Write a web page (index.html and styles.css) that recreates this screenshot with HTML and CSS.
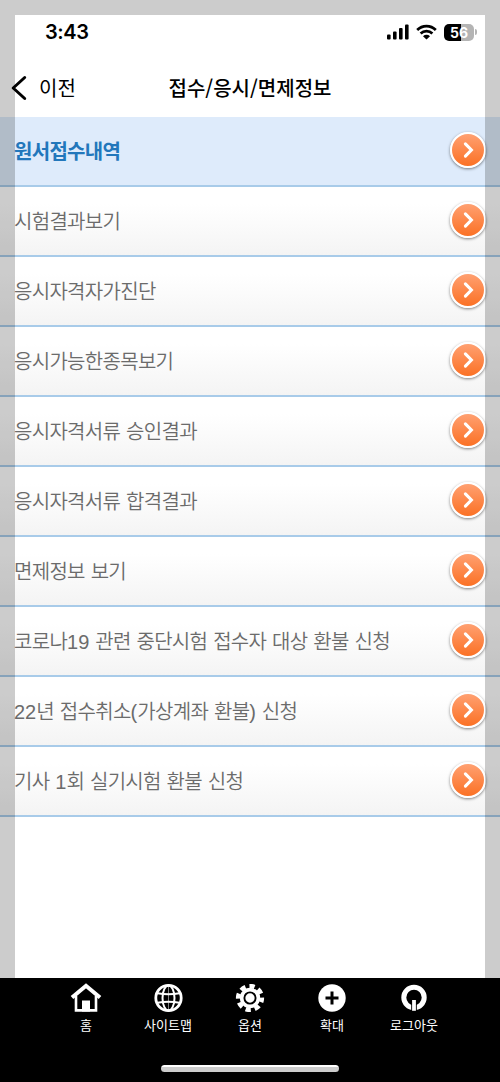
FILE: index.html
```html
<!DOCTYPE html>
<html lang="ko">
<head>
  <meta charset="utf-8">
  <title>접수/응시/면제정보</title>
  <link rel="stylesheet" href="styles.css">
</head>
<body>
  <div class="screen">
    <div class="status-bar">
      <span class="time">3:43</span>
      <div class="status-icons">
        <svg class="signal" width="23" height="16" viewBox="0 0 23 16">
          <rect x="0" y="10.5" width="3.6" height="5" rx="1"/>
          <rect x="6" y="7.5" width="3.6" height="8" rx="1"/>
          <rect x="12" y="4" width="3.6" height="11.5" rx="1"/>
          <rect x="18" y="0.5" width="3.6" height="15" rx="1"/>
        </svg>
        <svg class="wifi" width="21" height="16" viewBox="0 0 21 16">
          <path d="M1.2 6a13 13 0 0 1 18.6 0M4.6 9.5a8.5 8.5 0 0 1 11.8 0" fill="none" stroke="#000" stroke-width="2.7"/>
          <path d="M10.5 15.5L7 12.2a5 5 0 0 1 7 0z"/>
        </svg>
        <div class="battery">56</div>
        <div class="battery-tip"></div>
      </div>
    </div>

    <div class="header">
      <a class="back">
        <svg width="16" height="26" viewBox="0 0 16 26">
          <path d="M13.7 2.5L2.2 13l11.5 10.5" fill="none" stroke="#000" stroke-width="3" stroke-linecap="round" stroke-linejoin="round"/>
        </svg>
        <span>이전</span>
      </a>
      <h1>접수/응시/면제정보</h1>
    </div>

    <ul class="menu">
      <li class="on"><span>원서접수내역</span><i class="arrow"><svg viewBox="0 0 32 32"><path d="M13.4 9.8l6 6.2-6 6.2"/></svg></i></li>
      <li><span>시험결과보기</span><i class="arrow"><svg viewBox="0 0 32 32"><path d="M13.4 9.8l6 6.2-6 6.2"/></svg></i></li>
      <li><span>응시자격자가진단</span><i class="arrow"><svg viewBox="0 0 32 32"><path d="M13.4 9.8l6 6.2-6 6.2"/></svg></i></li>
      <li><span>응시가능한종목보기</span><i class="arrow"><svg viewBox="0 0 32 32"><path d="M13.4 9.8l6 6.2-6 6.2"/></svg></i></li>
      <li><span>응시자격서류 승인결과</span><i class="arrow"><svg viewBox="0 0 32 32"><path d="M13.4 9.8l6 6.2-6 6.2"/></svg></i></li>
      <li><span>응시자격서류 합격결과</span><i class="arrow"><svg viewBox="0 0 32 32"><path d="M13.4 9.8l6 6.2-6 6.2"/></svg></i></li>
      <li><span>면제정보 보기</span><i class="arrow"><svg viewBox="0 0 32 32"><path d="M13.4 9.8l6 6.2-6 6.2"/></svg></i></li>
      <li><span>코로나<b>19</b> 관련 중단시험 접수자 대상 환불 신청</span><i class="arrow"><svg viewBox="0 0 32 32"><path d="M13.4 9.8l6 6.2-6 6.2"/></svg></i></li>
      <li><span><b>22</b>년 접수취소<b>(</b>가상계좌 환불<b>)</b> 신청</span><i class="arrow"><svg viewBox="0 0 32 32"><path d="M13.4 9.8l6 6.2-6 6.2"/></svg></i></li>
      <li><span>기사 <b>1</b>회 실기시험 환불 신청</span><i class="arrow"><svg viewBox="0 0 32 32"><path d="M13.4 9.8l6 6.2-6 6.2"/></svg></i></li>
    </ul>

    <div class="footer">
      <div class="tabs">
        <a>
          <svg width="32" height="32" viewBox="0 0 32 32">
            <path d="M2 15.5L16 3.8l14 11.7" fill="none" stroke="#fff" stroke-width="4"/>
            <path d="M6 14v14.4h20V14" fill="none" stroke="#fff" stroke-width="2.6"/>
            <rect x="12" y="18.5" width="8" height="11" fill="#fff"/>
          </svg>
          <span>홈</span>
        </a>
        <a>
          <svg width="32" height="32" viewBox="0 0 32 32">
            <g fill="none" stroke="#fff" stroke-width="2">
              <circle cx="16.5" cy="16" r="12.7" stroke-width="2.8"/>
              <ellipse cx="16.5" cy="16" rx="6" ry="12.5"/>
              <path d="M5.5 11.3q11 2 22 0M5.5 20.7q11-2 22 0"/>
              <path d="M16.5 3v26" stroke-width="1" opacity=".5"/>
            </g>
          </svg>
          <span>사이트맵</span>
        </a>
        <a>
          <svg width="32" height="32" viewBox="0 0 32 32">
            <g transform="rotate(8 16 16)">
              <circle cx="16" cy="16" r="10.2" fill="#fff"/>
              <circle cx="16" cy="16" r="11.8" fill="none" stroke="#fff" stroke-width="4.6" stroke-dasharray="5.268 4" stroke-dashoffset="2.6"/>
            </g>
            <circle cx="16" cy="16" r="5.6" fill="none" stroke="#000" stroke-width="1.9"/>
          </svg>
          <span>옵션</span>
        </a>
        <a>
          <svg width="32" height="32" viewBox="0 0 32 32">
            <circle cx="16" cy="16" r="13.7" fill="#fff"/>
            <path d="M16 9.5v13M9.5 16h13" stroke="#000" stroke-width="3"/>
          </svg>
          <span>확대</span>
        </a>
        <a>
          <svg width="32" height="32" viewBox="0 0 32 32">
            <circle cx="16" cy="15.5" r="10.2" fill="none" stroke="#fff" stroke-width="5"/>
            <path d="M16 18v12" stroke="#000" stroke-width="5.6"/>
            <path d="M16 18v10.8" stroke="#fff" stroke-width="3.8"/>
          </svg>
          <span>로그아웃</span>
        </a>
      </div>
      <div class="home-bar"></div>
    </div>
    <div class="frame"></div>
  </div>
</body>
</html>
```

FILE: styles.css
```css
* {
  box-sizing: border-box;
}

body {
  margin: 0;
  background: #fff;
  font-family: "Liberation Sans", "Noto Sans CJK KR", sans-serif;
}

.screen {
  position: relative;
  display: flex;
  flex-direction: column;
  width: 500px;
  height: 1082px;
  overflow: hidden;
}

/* shaded edge over the whole screen */
.frame {
  position: absolute;
  inset: 0;
  border: 15px solid rgba(0, 0, 0, 0.2);
  pointer-events: none;
}

.status-bar {
  display: flex;
  justify-content: space-between;
  align-items: center;
  height: 34px;
  margin-top: 15px;
  padding: 0 23px 0 45px;
}

.time {
  font: 600 20px Inter, sans-serif;
  letter-spacing: -0.4px;
}

.status-icons {
  display: flex;
  align-items: center;
}

.wifi {
  margin: 0 7px 0 6px;
}

.battery {
  width: 30px;
  height: 17px;
  border-radius: 5px;
  background: linear-gradient(to right, #000 56%, #b4b4b4 56%);
  color: #fff;
  font: 700 14px/17px Inter, sans-serif;
  text-align: center;
}

.battery-tip {
  width: 2px;
  height: 6px;
  margin-left: 1px;
  border-radius: 0 2px 2px 0;
  background: #b4b4b4;
}

.header {
  display: grid;
  grid-template-columns: 100px 1fr 100px;
  align-items: center;
  height: 68px;
  padding-top: 9px;
}

.back {
  display: flex;
  align-items: center;
  gap: 12px;
  padding-left: 11px;
  font-size: 20px;
}

.header h1 {
  margin: 0;
  font-size: 20px;
  font-weight: 500;
  font-family: "Noto Sans CJK KR", sans-serif;
  text-align: center;
  white-space: nowrap;
}

.menu {
  margin: 0;
  padding: 0;
  list-style: none;
}

.menu li {
  display: flex;
  justify-content: space-between;
  align-items: center;
  height: 70px;
  padding: 0 14px 2px;
  border-bottom: 2px solid #a8cbe9;
  background: linear-gradient(#fff 25%, #f4f4f4);
  color: #6b6b6b;
  font-size: 20px;
  font-weight: 350;
  letter-spacing: -0.7px;
  word-spacing: 1px;
}

.menu li b {
  font-weight: inherit;
  letter-spacing: 0;
}

.menu li.on {
  background: #deebfb;
  color: #2277bb;
  font-weight: 700;
}

.arrow {
  width: 36px;
  height: 36px;
  border: 2px solid #fff;
  border-radius: 50%;
  background: linear-gradient(#ffa071, #fb7125);
  box-shadow: 0 1px 3px rgba(0, 0, 0, 0.5);
}

.arrow svg {
  display: block;
  fill: none;
  stroke: #fff;
  stroke-width: 3.1;
  stroke-linecap: round;
}

.footer {
  display: flex;
  flex-direction: column;
  align-items: center;
  justify-content: space-between;
  height: 104px;
  margin-top: auto;
  padding: 4px 0 10px;
  background: #000;
}

.tabs {
  display: flex;
}

.tabs a {
  display: flex;
  flex-direction: column;
  align-items: center;
  width: 82px;
  color: #fff;
  font-size: 13px;
  line-height: 24px;
}

.home-bar {
  width: 178px;
  height: 7px;
  border-radius: 4px;
  background: #fff;
}
```
